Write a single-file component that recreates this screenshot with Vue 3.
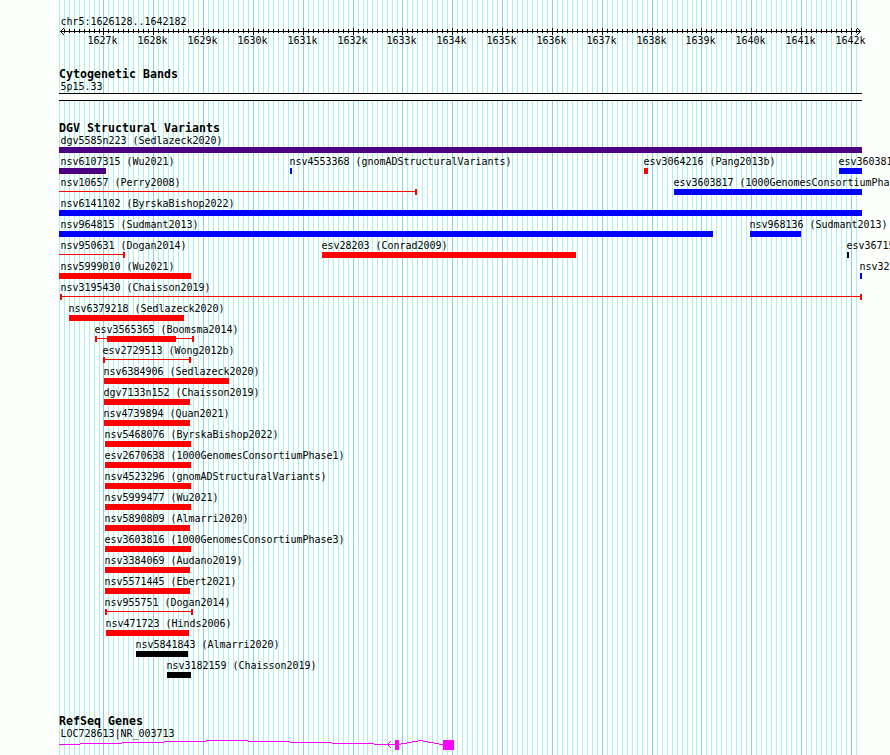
<script setup>
const LEFT = 59;
const RIGHT = 862;

// Grid lines, ten minor steps per kilobase
const lines = [];
for (let i = -9; i <= 151; i++) {
  const major = i % 10 === 0;
  const x = Math.floor(103.78 + i * 4.985 + (i < 0 ? 0.3 : 0));
  lines.push({ x, major, label: major ? `${1627 + i / 10}k` : "" });
}
const labels = lines.filter((l) => l.major);
const ticks = lines.filter((l) => l.x > LEFT + 1);

const indigo = "#4b0082";
const blue = "#0000ff";
const red = "#ff0000";
const black = "#000000";

const bar = (name, x, end, color = red) => ({
  name,
  x,
  boxes: [[x, end]],
  caps: [],
  color,
});

const span = (name, x, end, caps, boxes = []) => ({
  name,
  x,
  boxes,
  caps,
  line: [x, end],
  color: red,
});

const textX = (f) => (f.x <= LEFT + 1 ? LEFT + 1.6 : f.x - 0.4);

const rows = [
  [bar("dgv5585n223 (Sedlazeck2020)", LEFT, RIGHT, indigo)],
  [
    bar("nsv6107315 (Wu2021)", LEFT, 106, indigo),
    bar("nsv4553368 (gnomADStructuralVariants)", 290, 292, blue),
    bar("esv3064216 (Pang2013b)", 644, 648),
    bar("esv3603818 (1000GenomesConsortiumPhase3)", 839, RIGHT, blue),
  ],
  [
    span("nsv10657 (Perry2008)", LEFT, 417, [415]),
    bar("esv3603817 (1000GenomesConsortiumPhase3)", 674, RIGHT, blue),
  ],
  [bar("nsv6141102 (ByrskaBishop2022)", LEFT, RIGHT, blue)],
  [
    bar("nsv964815 (Sudmant2013)", LEFT, 713, blue),
    bar("nsv968136 (Sudmant2013)", 750, 801, blue),
  ],
  [
    span("nsv950631 (Dogan2014)", LEFT, 125, [123]),
    bar("esv28203 (Conrad2009)", 322, 576),
    bar("esv36715", 847, 849, black),
  ],
  [
    bar("nsv5999010 (Wu2021)", LEFT, 191),
    bar("nsv32", 860, RIGHT, blue),
  ],
  [span("nsv3195430 (Chaisson2019)", 60, RIGHT, [60, 860])],
  [bar("nsv6379218 (Sedlazeck2020)", 69, 184)],
  [span("esv3565365 (Boomsma2014)", 95, 194, [95, 192], [[107, 176]])],
  [span("esv2729513 (Wong2012b)", 103, 191, [103, 189])],
  [bar("nsv6384906 (Sedlazeck2020)", 104, 229)],
  [bar("dgv7133n152 (Chaisson2019)", 104, 190)],
  [bar("nsv4739894 (Quan2021)", 104, 190)],
  [bar("nsv5468076 (ByrskaBishop2022)", 105, 191)],
  [bar("esv2670638 (1000GenomesConsortiumPhase1)", 105, 191)],
  [bar("nsv4523296 (gnomADStructuralVariants)", 105, 191)],
  [bar("nsv5999477 (Wu2021)", 105, 191)],
  [bar("nsv5890809 (Almarri2020)", 105, 190)],
  [bar("esv3603816 (1000GenomesConsortiumPhase3)", 105, 191)],
  [bar("nsv3384069 (Audano2019)", 105, 190)],
  [bar("nsv5571445 (Ebert2021)", 105, 190)],
  [span("nsv955751 (Dogan2014)", 105, 193, [105, 191])],
  [bar("nsv471723 (Hinds2006)", 106, 189)],
  [bar("nsv5841843 (Almarri2020)", 136, 188, black)],
  [bar("nsv3182159 (Chaisson2019)", 167, 191, black)],
];

// Introns as stepped segments: x, end, y
const introns = [
  [59, 80, 16],
  [80, 122, 15],
  [122, 164, 14],
  [164, 206, 13],
  [206, 248, 12],
  [248, 290, 13],
  [290, 332, 14],
  [332, 374, 15],
  [374, 395, 16],
  [399, 401, 16],
  [401, 407, 15],
  [407, 412, 14],
  [412, 418, 13],
  [418, 423, 12],
  [423, 428, 13],
  [428, 434, 14],
  [434, 439, 15],
  [439, 443, 16],
];
</script>

<template>
  <main class="browser">
    <svg class="grid" width="890" height="755">
      <rect
        v-for="l in lines"
        :key="l.x"
        :class="{ major: l.major }"
        :x="l.x"
        y="0"
        width="1"
        height="755"
      />
    </svg>

    <section class="ruler">
      <svg width="890" height="50">
        <text x="60.6" y="25">chr5:1626128..1642182</text>
        <rect x="60" y="31" width="801" height="1" />
        <rect
          v-for="l in ticks"
          :key="l.x"
          :x="l.x"
          :y="l.major ? 28 : 29"
          width="1"
          :height="l.major ? 7 : 4"
        />
        <path d="M63 28h1v1h-1zM62 29h1v1h-1zM61 30h1v1h-1zM61 32h1v1h-1zM62 33h1v1h-1zM63 34h1v1h-1z" />
        <path d="M857 28h1v1h-1zM858 29h1v1h-1zM859 30h1v1h-1zM859 32h1v1h-1zM858 33h1v1h-1zM857 34h1v1h-1z" />
        <text v-for="l in labels" :key="l.label" :x="l.x - 15.4" y="44">
          {{ l.label }}
        </text>
      </svg>
    </section>

    <section class="cytobands">
      <h2>Cytogenetic Bands</h2>
      <p>5p15.33</p>
      <div class="band"></div>
    </section>

    <section class="variants">
      <h2>DGV Structural Variants</h2>
      <svg v-for="(row, i) in rows" :key="i" width="890" height="21">
        <g v-for="f in row" :key="f.name" :fill="f.color">
          <text :x="textX(f)" y="11">{{ f.name }}</text>
          <rect
            v-if="f.line"
            :x="f.line[0]"
            y="16"
            :width="f.line[1] - f.line[0]"
            height="1"
          />
          <rect v-for="c in f.caps" :key="c" :x="c" y="14" width="2" height="6" />
          <rect
            v-for="b in f.boxes"
            :key="b[0]"
            :x="b[0]"
            y="14"
            :width="b[1] - b[0]"
            height="6"
          />
        </g>
      </svg>
    </section>

    <section class="genes">
      <h2>RefSeq Genes</h2>
      <svg width="890" height="27">
        <text x="60.6" y="9">LOC728613|NR_003713</text>
        <g class="gene">
          <rect
            v-for="s in introns"
            :key="s[0]"
            :x="s[0]"
            :y="s[2]"
            :width="s[1] - s[0]"
            height="1"
          />
          <path d="M390 13h1v1h-1zM389 14h1v1h-1zM388 15h1v1h-1zM387 16h1v1h-1zM388 17h1v1h-1zM389 18h1v1h-1zM390 19h1v1h-1z" />
          <rect x="395" y="12" width="4" height="10" />
          <rect x="443" y="12" width="11" height="10" />
        </g>
      </svg>
    </section>
  </main>
</template>

<style>
body {
  margin: 0;
  overflow: hidden;
}
</style>

<style scoped>
.browser {
  position: relative;
  width: 890px;
  height: 755px;
  overflow: hidden;
  background-color: #fdfffc;
  color: black;
  font-family: "DejaVu Sans Mono", monospace;
  font-size: 10px;
  letter-spacing: -0.02px;
}

.grid {
  position: absolute;
  left: 0;
  top: 0;
  fill: #afeeee;
}

.grid .major {
  fill: #87ceeb;
}

section {
  position: relative;
}

svg {
  display: block;
  shape-rendering: crispEdges;
}

text {
  fill: black;
}

h2 {
  margin: 0;
  padding-left: 59px;
  height: 14px;
  font-size: 11.6px;
  line-height: 14px;
  letter-spacing: 0.016px;
}

p {
  margin: 0;
  padding-left: 60.6px;
  line-height: 12px;
}

.ruler {
  height: 67px;
}

.cytobands {
  height: 54px;
}

.band {
  box-sizing: border-box;
  width: 803px;
  height: 8px;
  margin-left: 59px;
  border: solid black;
  border-width: 1px 0;
  background-color: #fdfffc;
}

.variants {
  height: 593px;
}

.variants h2 {
  height: 12px;
}

.gene {
  fill: #ff00ff;
}
</style>
